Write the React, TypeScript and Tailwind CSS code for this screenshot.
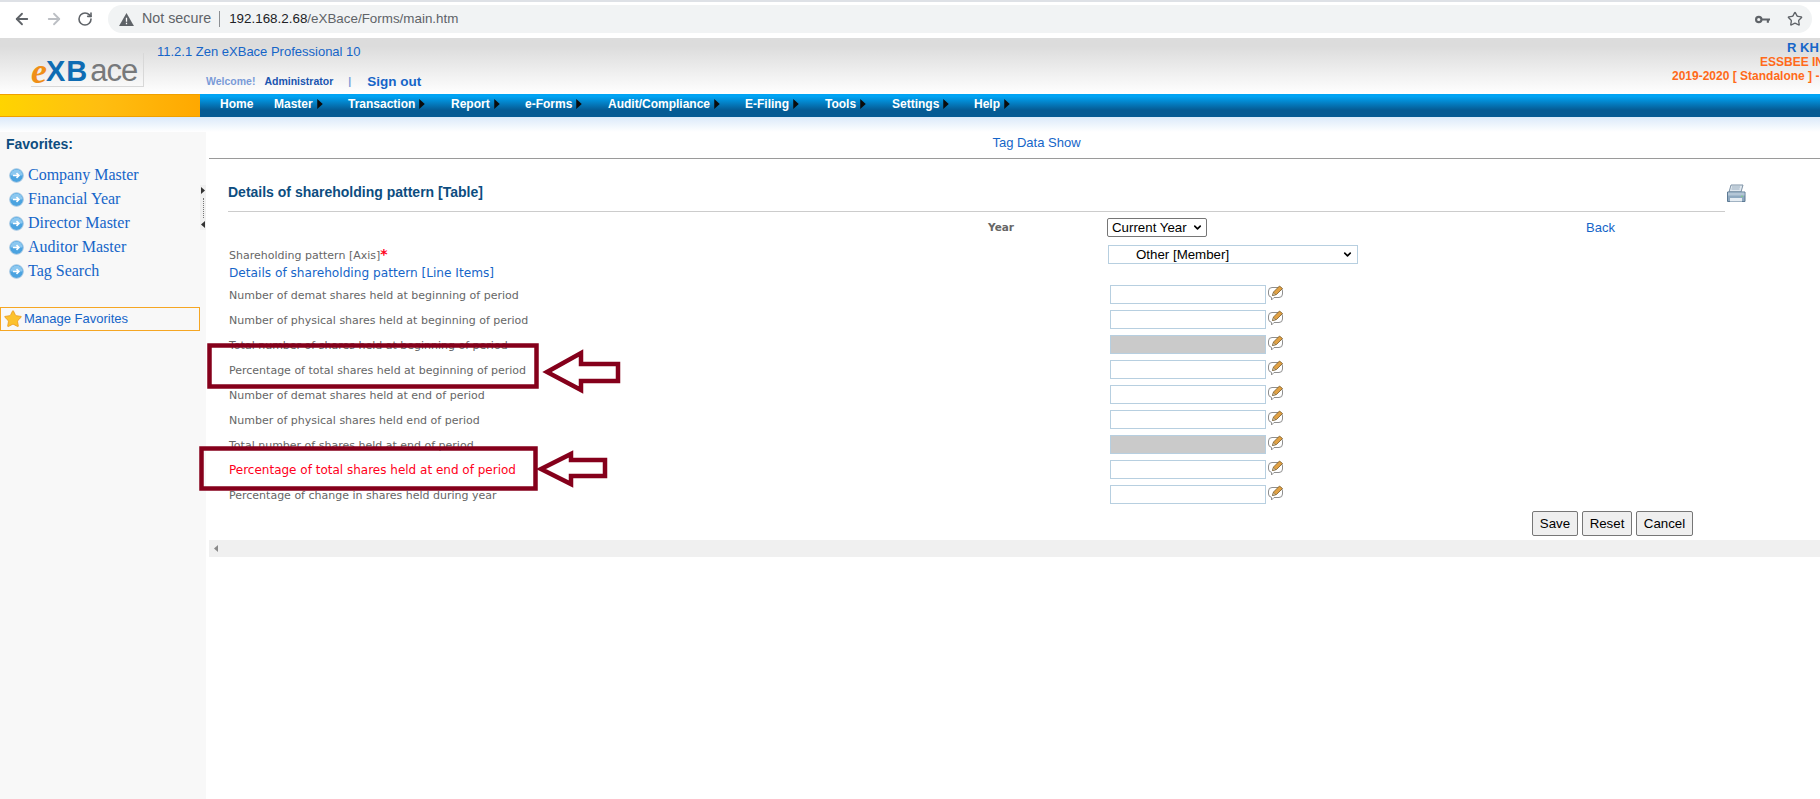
import { ArrowLeft, ArrowRight, RotateCw, Star, ChevronDown } from "lucide-react"

const menus = [
  { label: "Home", left: 220, arrow: false },
  { label: "Master", left: 274, arrow: true },
  { label: "Transaction", left: 348, arrow: true },
  { label: "Report", left: 451, arrow: true },
  { label: "e-Forms", left: 525, arrow: true },
  { label: "Audit/Compliance", left: 608, arrow: true },
  { label: "E-Filing", left: 745, arrow: true },
  { label: "Tools", left: 825, arrow: true },
  { label: "Settings", left: 892, arrow: true },
  { label: "Help", left: 974, arrow: true },
]

const favorites = ["Company Master", "Financial Year", "Director Master", "Auditor Master", "Tag Search"]

const rows = [
  { label: "Number of demat shares held at beginning of period" },
  { label: "Number of physical shares held at beginning of period" },
  { label: "Total number of shares held at beginning of period", disabled: true },
  { label: "Percentage of total shares held at beginning of period" },
  { label: "Number of demat shares held at end of period" },
  { label: "Number of physical shares held end of period" },
  { label: "Total number of shares held at end of period", disabled: true },
  { label: "Percentage of total shares held at end of period", error: true },
  { label: "Percentage of change in shares held during year" },
]

function FavIcon() {
  return (
    <svg width="15" height="15" viewBox="0 0 16 16" className="shrink-0">
      <circle cx="8" cy="8" r="7.3" fill="#4ba3e0" stroke="#a9c9e2" />
      <path d="M1.5 8a6.5 6.5 0 0 1 13 0z" fill="#8cc8f0" />
      <path d="M4.2 8h6M8 5.5 10.6 8 8 10.5" fill="none" stroke="#fff" strokeWidth="1.7" />
    </svg>
  )
}

function PencilNote() {
  return (
    <svg width="17" height="17" viewBox="0 0 17 17" className="shrink-0">
      <path d="M5 2.5h7a3.5 3.5 0 0 1 3.500 3.500v3a3.500 3.500 0 0 1-3.500 3.500H7l-2.500 2.500V12.300A3.500 3.500 0 0 1 1.500 9V6A3.500 3.500 0 0 1 5 2.500z" fill="#fff" stroke="#8f8f8f" />
      <path d="M5.500 10.500 6.500 7 12.500 1l3 2.500-6 6z" fill="#e0a043" stroke="#7a5a26" strokeWidth="0.8" />
      <path d="M5.500 10.500 6.500 7.500 8.800 9.600z" fill="#e9d9b8" stroke="#6a5a3a" strokeWidth="0.5" />
    </svg>
  )
}

function Printer() {
  return (
    <svg width="20" height="19" viewBox="0 0 20 19" className="absolute left-[1498px] top-[25px]">
      <path d="M5 1h12l-2 7H3z" fill="#dfe7ee" stroke="#7f93a6" />
      <path d="M6 3h8M5.500 5h8" stroke="#9db0c1" />
      <path d="M1.500 8h17.500v9.500H1.500z" fill="#8fa9c0" stroke="#5d7a94" />
      <path d="M2 8.500h16.500v3H2z" fill="#b4c6d6" />
      <path d="M4 14h12v3.500H4z" fill="#e6edf3" />
      <path d="M15 11.800h2v1h-2z" fill="#7ed07e" />
    </svg>
  )
}

function NavArrow() {
  return (
    <svg width="6" height="10" viewBox="0 0 5 9" className="ml-[4px]">
      <path d="M0 0 5 4.500 0 9z" fill="#0b0b0b" />
    </svg>
  )
}

function Annotations() {
  return (
    <svg className="absolute left-0 top-0 pointer-events-none" width="700" height="520" viewBox="0 0 700 520">
      <g fill="none" stroke="#85001b" strokeWidth="4.500">
        <rect x="209.500" y="345.500" width="327" height="41" />
        <rect x="201.500" y="448.500" width="334" height="40" />
        <path d="M547 372 581 353v11h37v17h-37v9z" />
        <path d="M541 469 571 454v6h34v16h-34v8z" />
      </g>
    </svg>
  )
}

export default function App() {
  return (
    <div className="relative h-[799px] w-[1820px] overflow-hidden bg-white font-['Liberation_Sans',sans-serif]">
      {/* browser bar */}
      <div className="h-[2px] bg-[#dee1e6]" />
      <div className="flex h-[36px] items-center pb-[2px]">
        <div className="flex w-[108px] shrink-0 items-center gap-[14px] pl-[13px]">
          <ArrowLeft size={18} strokeWidth={2.4} className="text-[#5f6368]" />
          <ArrowRight size={18} strokeWidth={2.4} className="text-[#bcbfc4]" />
          <RotateCw size={16} strokeWidth={2.4} className="text-[#5f6368]" />
        </div>
        <div className="flex h-[28px] w-[1704px] items-center rounded-full bg-[#f1f3f4] pl-[11px]">
          <svg width="15" height="13" viewBox="0 0 16 14"><path d="M8 0 16 14H0z" fill="#5f6368" /><path d="M7.300 5h1.400v4.500H7.300zM7.300 10.500h1.400V12H7.300z" fill="#fff" /></svg>
          <span className="ml-[8px] text-[14.300px] text-[#5f6368]">Not secure</span>
          <span className="ml-[8px] mr-[9px] h-[16px] w-px bg-[#8c8f93]" />
          <span className="text-[13.400px] text-[#202124]">192.168.2.68<span className="text-[#5f6368]">/eXBace/Forms/main.htm</span></span>
          <div className="ml-auto flex items-center gap-[17px] pr-[9px]">
            <svg width="15" height="9" viewBox="0 0 14 8"><circle cx="3.500" cy="4" r="2.500" fill="none" stroke="#5f6368" strokeWidth="2" /><path d="M6 3h8v2h-1v2h-2V5H6z" fill="#5f6368" /></svg>
            <Star size={16} strokeWidth={2} className="text-[#5f6368]" />
          </div>
        </div>
      </div>

      {/* app header */}
      <header className="relative flex h-[56px] bg-gradient-to-b from-[#dcdcdc] from-15% to-white">
        <div className="w-[157px] shrink-0 pl-[31px] pt-[15px]">
          <div className="flex h-[34px] w-[113px] items-end border-r border-b border-[#d8d8d8] pb-[1px] leading-[28px]">
            <span className="font-['Liberation_Serif',serif] text-[36px] font-bold italic leading-[28px] text-[#ef8f18]">e</span>
            <span className="-ml-[1px] text-[29px] font-bold leading-[28px] tracking-[1px] text-[#0f6cb3]">XB</span>
            <span className="ml-[2px] text-[31px] leading-[28px] tracking-[-1px] text-[#77797b]">ace</span>
          </div>
        </div>
        <div className="flex flex-col">
          <span className="pt-[6px] text-[13px] leading-[15px] text-[#1565c8]">11.2.1 Zen eXBace Professional 10</span>
          <div className="mt-[13px] flex items-center pl-[49px] text-[10.500px] font-bold">
            <span className="text-[#7a9bd8]">Welcome!</span>
            <span className="ml-[9px] text-[#1a55b0]">Administrator</span>
            <span className="ml-[15px] text-[#7a9bd8]">|</span>
            <span className="ml-[16px] text-[13.500px] text-[#1565c8]">Sign out</span>
          </div>
        </div>
        <div className="ml-auto flex w-[300px] flex-col pt-[3px] text-[12px] font-bold leading-[14px] whitespace-nowrap">
          <span className="pl-[267px] text-[13px] text-[#1565c8]">R KH</span>
          <span className="pl-[240px] text-[#ff6a1a]">ESSBEE IN</span>
          <span className="pl-[152px] text-[#ff6a1a]">2019-2020 [ Standalone ] -</span>
        </div>
      </header>

      {/* menu bar */}
      <nav className="relative flex h-[23px] bg-gradient-to-b from-[#00a4f4] from-10% via-[#055b94] via-70% to-[#055b94]">
        <div className="h-full w-[200px] shrink-0 border-y border-[#f0a000] bg-gradient-to-r from-[#ffd400] via-[#ffbe10] to-[#ffa800]" />
        {menus.map(m => (
          <span key={m.label} style={{ left: m.left }} className="absolute top-[3px] flex items-center text-[12px] font-bold leading-[14px] text-white">
            {m.label}
            {m.arrow && <NavArrow />}
          </span>
        ))}
      </nav>
      <div className="h-[15px] bg-gradient-to-b from-[#dbeafa] to-white" />

      <div className="flex">
        {/* favorites */}
        <aside className="h-[667px] w-[206px] shrink-0 bg-[#f8f8f8] pt-[4px]">
          <h3 className="pl-[6px] text-[14px] font-bold leading-[16px] text-[#0d4d80]">Favorites:</h3>
          <ul className="mt-[11px]">
            {favorites.map(f => (
              <li key={f} className="flex h-[24px] items-center gap-[4px] pl-[9px] font-['Liberation_Serif',serif] text-[16px] text-[#1565c8]">
                <FavIcon />
                {f}
              </li>
            ))}
          </ul>
          <div className="mt-[24px] flex h-[24px] w-[200px] items-center gap-[1px] border border-[#f5a623] pl-[2px] text-[13px] text-[#1565c8]">
            <Star size={20} fill="#fcc22e" strokeWidth={1} className="text-[#ea9a1c]" />
            Manage Favorites
          </div>
        </aside>

        {/* main form */}
        <main className="flex-1 pl-[3px]">
          <div className="h-[27px] border-b border-[#9a9a9a] pl-[44px] pt-[3px] text-center text-[13px] leading-[15px] text-[#1565c8]">
            Tag Data Show
          </div>
          <div className="pl-[19px]">
            <div className="relative h-[53px] w-[1497px] border-b border-[#cccccc] pt-[25px] text-[14px] font-bold leading-[16px] text-[#0d4d80]">
              Details of shareholding pattern [Table]
              <Printer />
            </div>
            <div className="relative h-[27px]">
              <span className="absolute left-[760px] top-[8px] font-['DejaVu_Sans',sans-serif] text-[10.500px] font-bold text-[#666666]">Year</span>
              <div className="absolute left-[879px] top-[6px] flex h-[19px] w-[100px] items-center justify-between rounded-[2px] border border-[#767676] pl-[4px] pr-[3px] text-[13.300px] text-black">
                Current Year
                <ChevronDown size={11} strokeWidth={3.500} />
              </div>
              <span className="absolute left-[1358px] top-[6px] text-[13px] text-[#1565c8]">Back</span>
            </div>
            <div className="relative h-[25px] pl-[1px] pt-[10px] font-['DejaVu_Sans',sans-serif] text-[11px] leading-[14px] text-[#666666]">
              Shareholding pattern [Axis]<span className="text-[14px] font-bold leading-[10px] text-[#ff0020]">*</span>
              <div className="absolute left-[880px] top-[6px] flex h-[19px] w-[250px] items-center justify-between border border-[#b7cfe0] pl-[27px] pr-[4px] font-['Liberation_Sans',sans-serif] text-[13.300px] text-black">
                Other [Member]
                <ChevronDown size={11} strokeWidth={3.500} />
              </div>
            </div>
            <div className="h-[16px] pl-[1px] pt-[2px] font-['DejaVu_Sans',sans-serif] text-[12.150px] leading-[14px] text-[#1565c8]">
              Details of shareholding pattern [Line Items]
            </div>
            <div className="mt-[5px]">
              {rows.map(r => (
                <div key={r.label} className="flex h-[25px] items-start">
                  <span className={r.error
                    ? "w-[882px] pl-[1px] pt-[2px] font-['DejaVu_Sans',sans-serif] text-[12px] leading-[16px] text-[#ff0020]"
                    : "w-[882px] pl-[1px] pt-[3px] font-['DejaVu_Sans',sans-serif] text-[11px] leading-[16px] text-[#666666]"}>
                    {r.label}
                  </span>
                  <div className={r.disabled ? "h-[19px] w-[156px] border border-[#b7cfe0] bg-[#cacaca]" : "h-[19px] w-[156px] border border-[#b7cfe0] bg-white"} />
                  <span className="ml-[1px]"><PencilNote /></span>
                </div>
              ))}
            </div>
            <div className="flex justify-end gap-[4px] pr-[127px] pt-[1px] text-[13.300px] text-black">
              <span className="flex h-[25px] w-[46px] items-center justify-center rounded-[2px] border border-[#767676] bg-[#efefef]">Save</span>
              <span className="flex h-[25px] w-[50px] items-center justify-center rounded-[2px] border border-[#767676] bg-[#efefef]">Reset</span>
              <span className="flex h-[25px] w-[57px] items-center justify-center rounded-[2px] border border-[#767676] bg-[#efefef]">Cancel</span>
            </div>
          </div>
          <div className="mt-[4px] flex h-[17px] items-center bg-[#f0f0f0] pl-[5px]">
            <svg width="4" height="7" viewBox="0 0 4 7"><path d="M4 0v7L0 3.500z" fill="#8a8a8a" /></svg>
          </div>
        </main>
      </div>

      {/* splitter handle between the favorites panel and the form */}
      <div className="absolute left-[200px] top-[185px] flex h-[45px] w-[6px] flex-col items-center justify-between bg-[#f0f0f0] py-[2px]">
        <svg width="4" height="7" viewBox="0 0 4 7"><path d="M0 0v7L4 3.500z" fill="#333333" /></svg>
        <span className="h-[20px] w-px border-l border-dotted border-[#777777]" />
        <svg width="4" height="7" viewBox="0 0 4 7"><path d="M4 0v7L0 3.500z" fill="#333333" /></svg>
      </div>

      <Annotations />
    </div>
  )
}
